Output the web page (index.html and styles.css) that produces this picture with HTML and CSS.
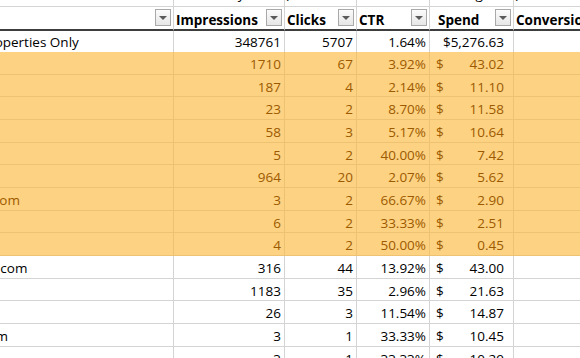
FILE: index.html
```html
<!DOCTYPE html>
<html>
<head>
<meta charset="utf-8">
<link rel="stylesheet" href="styles.css">
</head>
<body>
<div class="sheet">
  <div class="row top">
    <div class="cell"></div>
    <div class="cell c-mid"><span class="desc">Daily</span></div>
    <div class="cell"><span class="desc">(</span></div>
    <div class="cell"></div>
    <div class="cell c-mid"><span class="desc">Avg</span></div>
    <div class="cell"><span class="desc">(</span></div>
  </div>
  <div class="row head">
    <div class="cell"><span class="lbl"></span><span class="filt"></span></div>
    <div class="cell"><span class="lbl">Impressions</span><span class="filt"></span></div>
    <div class="cell"><span class="lbl">Clicks</span><span class="filt"></span></div>
    <div class="cell"><span class="lbl">CTR</span><span class="filt"></span></div>
    <div class="cell"><span class="lbl sp">Spend</span><span class="filt"></span></div>
    <div class="cell"><span class="lbl">Conversions</span></div>
  </div>
  <div class="row total">
    <div class="cell">Properties Only</div>
    <div class="cell num">348761</div>
    <div class="cell num">5707</div>
    <div class="cell num">1.64%</div>
    <div class="cell acct end"><span>$5,276.63</span></div>
    <div class="cell"></div>
  </div>

  <div class="row hl">
    <div class="cell"></div><div class="cell num">1710</div><div class="cell num">67</div><div class="cell num">3.92%</div>
    <div class="cell acct"><span>$</span><span>43.02</span></div><div class="cell"></div>
  </div>
  <div class="row hl">
    <div class="cell"></div><div class="cell num">187</div><div class="cell num">4</div><div class="cell num">2.14%</div>
    <div class="cell acct"><span>$</span><span>11.10</span></div><div class="cell"></div>
  </div>
  <div class="row hl">
    <div class="cell"></div><div class="cell num">23</div><div class="cell num">2</div><div class="cell num">8.70%</div>
    <div class="cell acct"><span>$</span><span>11.58</span></div><div class="cell"></div>
  </div>
  <div class="row hl">
    <div class="cell"></div><div class="cell num">58</div><div class="cell num">3</div><div class="cell num">5.17%</div>
    <div class="cell acct"><span>$</span><span>10.64</span></div><div class="cell"></div>
  </div>
  <div class="row hl">
    <div class="cell"></div><div class="cell num">5</div><div class="cell num">2</div><div class="cell num">40.00%</div>
    <div class="cell acct"><span>$</span><span>7.42</span></div><div class="cell"></div>
  </div>
  <div class="row hl">
    <div class="cell"></div><div class="cell num">964</div><div class="cell num">20</div><div class="cell num">2.07%</div>
    <div class="cell acct"><span>$</span><span>5.62</span></div><div class="cell"></div>
  </div>
  <div class="row hl">
    <div class="cell">b.com</div><div class="cell num">3</div><div class="cell num">2</div><div class="cell num">66.67%</div>
    <div class="cell acct"><span>$</span><span>2.90</span></div><div class="cell"></div>
  </div>
  <div class="row hl">
    <div class="cell"></div><div class="cell num">6</div><div class="cell num">2</div><div class="cell num">33.33%</div>
    <div class="cell acct"><span>$</span><span>2.51</span></div><div class="cell"></div>
  </div>
  <div class="row hl">
    <div class="cell"></div><div class="cell num">4</div><div class="cell num">2</div><div class="cell num">50.00%</div>
    <div class="cell acct"><span>$</span><span>0.45</span></div><div class="cell"></div>
  </div>

  <div class="row">
    <div class="cell">ab.com</div><div class="cell num">316</div><div class="cell num">44</div><div class="cell num">13.92%</div>
    <div class="cell acct"><span>$</span><span>43.00</span></div><div class="cell"></div>
  </div>
  <div class="row">
    <div class="cell"></div><div class="cell num">1183</div><div class="cell num">35</div><div class="cell num">2.96%</div>
    <div class="cell acct"><span>$</span><span>21.63</span></div><div class="cell"></div>
  </div>
  <div class="row">
    <div class="cell"></div><div class="cell num">26</div><div class="cell num">3</div><div class="cell num">11.54%</div>
    <div class="cell acct"><span>$</span><span>14.87</span></div><div class="cell"></div>
  </div>
  <div class="row">
    <div class="cell">com</div><div class="cell num">3</div><div class="cell num">1</div><div class="cell num">33.33%</div>
    <div class="cell acct"><span>$</span><span>10.45</span></div><div class="cell"></div>
  </div>
  <div class="row">
    <div class="cell"></div><div class="cell num">3</div><div class="cell num">1</div><div class="cell num">33.33%</div>
    <div class="cell acct"><span>$</span><span>10.29</span></div><div class="cell"></div>
  </div>
</div>
</body>
</html>
```
FILE: styles.css
```css
html, body {
  margin: 0;
  padding: 0;
  background: #ffffff;
  overflow: hidden;
}
body {
  width: 580px;
  height: 358px;
}
.sheet {
  margin-left: -22px;
  width: 642px;
  font-family: "Open Sans", "Liberation Sans", sans-serif;
  font-size: 13.5px;
  color: #000;
}
.row {
  display: grid;
  grid-template-columns: 196px 111px 72px 73px 84px 106px;
  height: 22.667px;
}
.cell {
  box-sizing: border-box;
  border-right: 1px solid #d4d4d4;
  border-bottom: 1px solid #d4d4d4;
  display: flex;
  align-items: flex-end;
  padding: 0 3px 1.5px 3px;
  line-height: 16px;
  white-space: nowrap;
  overflow: hidden;
}
.num {
  justify-content: flex-end;
}
.acct {
  justify-content: space-between;
  padding-left: 6px;
  padding-right: 9px;
}
.acct.end {
  justify-content: flex-end;
}

/* top (partially visible) row */
.row.top {
  height: 7px;
}
.row.top .cell {
  padding: 0;
  align-items: flex-start;
}
.c-mid {
  justify-content: center;
}
.desc {
  margin-top: -14px;
  font-size: 13.5px;
}

/* header */
.row.head {
  height: 24px;
}
.row.head .cell {
  border-bottom: 2px solid #3d3d3d;
  font-weight: 700;
  padding: 0 2px 1px 2px;
  position: relative;
}
.lbl {
  flex: 1;
}
.lbl.sp {
  padding-left: 6px;
}
.filt {
  box-sizing: border-box;
  width: 16px;
  height: 17px;
  margin-bottom: 2px;
  border: 1px solid #a9a9a9;
  background: linear-gradient(#fbfbfb, #e6e6e6);
  display: flex;
  align-items: center;
  justify-content: center;
  flex: none;
}
.filt::after {
  content: "";
  width: 0;
  height: 0;
  border-left: 4px solid transparent;
  border-right: 4px solid transparent;
  border-top: 4px solid #5a5a5a;
}

/* totals row */
.row.total {
  height: 21px;
}
.row.total .cell {
  border-bottom: none;
  padding-bottom: 2.2px;
}

/* highlighted rows */
.row.hl .cell {
  background: #fdd282;
  color: #9c5a00;
  border-right-color: #eec273;
  border-bottom-color: #eec273;
}
```
